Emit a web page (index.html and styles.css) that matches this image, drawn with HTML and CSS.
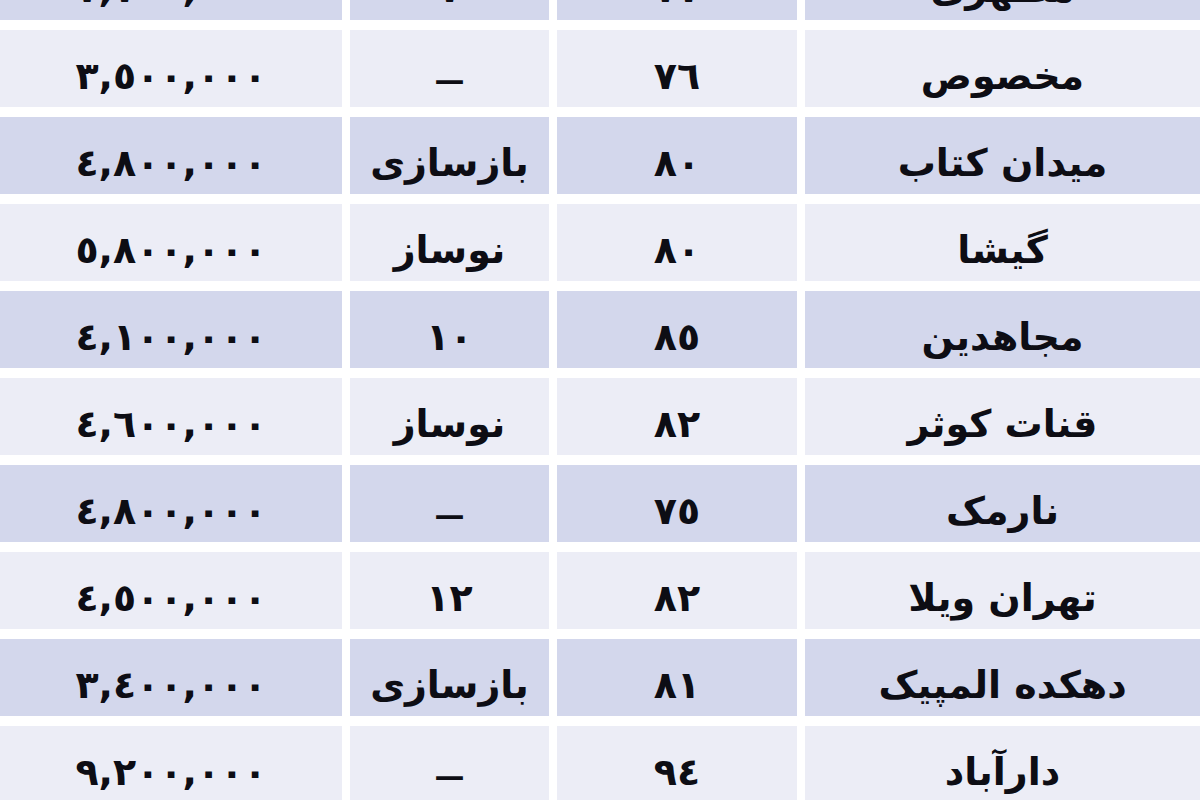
FILE: index.html
```html
<!DOCTYPE html>
<html lang="fa">
<head>
<meta charset="utf-8">
<link rel="stylesheet" href="styles.css">
</head>
<body>
<div class="table" dir="rtl">
  <div class="row shade"><div class="cell name">مطهری</div><div class="cell">٧٧</div><div class="cell">٧</div><div class="cell num">٧,٧٠٠,٠٠٠</div></div>
  <div class="row"><div class="cell name">مخصوص</div><div class="cell">٧٦</div><div class="cell dash">—</div><div class="cell num">٣,٥٠٠,٠٠٠</div></div>
  <div class="row shade"><div class="cell name">میدان کتاب</div><div class="cell">٨٠</div><div class="cell">بازسازی</div><div class="cell num">٤,٨٠٠,٠٠٠</div></div>
  <div class="row"><div class="cell name">گیشا</div><div class="cell">٨٠</div><div class="cell">نوساز</div><div class="cell num">٥,٨٠٠,٠٠٠</div></div>
  <div class="row shade"><div class="cell name">مجاهدین</div><div class="cell">٨٥</div><div class="cell">١٠</div><div class="cell num">٤,١٠٠,٠٠٠</div></div>
  <div class="row"><div class="cell name">قنات کوثر</div><div class="cell">٨٢</div><div class="cell">نوساز</div><div class="cell num">٤,٦٠٠,٠٠٠</div></div>
  <div class="row shade"><div class="cell name">نارمک</div><div class="cell">٧٥</div><div class="cell dash">—</div><div class="cell num">٤,٨٠٠,٠٠٠</div></div>
  <div class="row"><div class="cell name">تهران ویلا</div><div class="cell">٨٢</div><div class="cell">١٢</div><div class="cell num">٤,٥٠٠,٠٠٠</div></div>
  <div class="row shade"><div class="cell name">دهکده المپیک</div><div class="cell">٨١</div><div class="cell">بازسازی</div><div class="cell num">٣,٤٠٠,٠٠٠</div></div>
  <div class="row"><div class="cell name">دارآباد</div><div class="cell">٩٤</div><div class="cell dash">—</div><div class="cell num">٩,٢٠٠,٠٠٠</div></div>
</div>
</body>
</html>
```

FILE: styles.css
```css
html, body {
  margin: 0;
  padding: 0;
  background: #ffffff;
  overflow: hidden;
}

.table {
  display: grid;
  grid-template-columns: 395px 240px 199px 342px;
  column-gap: 8px;
  row-gap: 10px;
  margin-top: -57px;
  width: 1200px;
  font-family: "DejaVu Sans", sans-serif;
  font-weight: bold;
  color: #0d0d14;
}

.row {
  display: contents;
}

.cell {
  height: 77px;
  display: flex;
  align-items: center;
  justify-content: center;
  padding-top: 14px;
  box-sizing: border-box;
  font-size: 38px;
  background: #ecedf6;
}

.row.shade .cell {
  background: #d3d7ec;
}

.cell.num {
  letter-spacing: 4px;
}

.cell.dash {
  font-size: 30px;
  font-weight: bold;
  padding-top: 22px;
}
```
